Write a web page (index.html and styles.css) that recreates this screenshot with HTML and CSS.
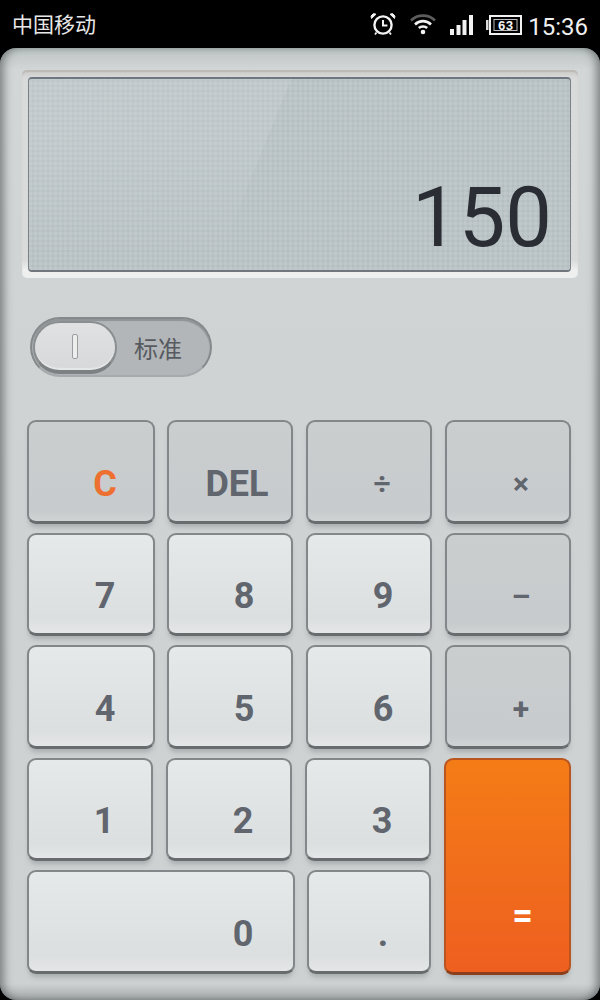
FILE: index.html
```html
<!DOCTYPE html>
<html lang="zh-CN">
<head>
    <meta charset="UTF-8">
    <meta name="viewport" content="width=device-width, initial-scale=1.0">
    <title>计算器</title>
    <link rel="stylesheet" href="styles.css">
</head>
<body>
    <div class="statusbar">
        <span class="carrier">中国移动</span>
        <div class="status-right">
            <svg class="icon-alarm" width="26" height="24" viewBox="0 0 26 24" fill="none" stroke="#f2f2f2">
                <circle cx="13" cy="13" r="8.600" stroke-width="2.400"/>
                <path d="M13 8v5.400h4.400" stroke-width="2"/>
                <path d="M1.500 6.500 6 2.200 3.400 1.600 1 4z M24.500 6.500 20 2.200l2.600-.6L25 4z" fill="#f2f2f2" stroke-width="1"/>
                <path d="M6.500 20.500 5 22.500M19.500 20.500l1.500 2" stroke-width="1.800"/>
            </svg>
            <svg class="icon-wifi" width="26" height="22" viewBox="0 0 26 22" fill="none" stroke-width="2.600">
                <path d="M1 7.500C7.500 1 18.500 1 25 7.500" stroke="#5d5d5d"/>
                <path d="M5 11.500C9.500 7 16.500 7 21 11.500" stroke="#f2f2f2"/>
                <path d="M8.800 15C11 13 15 13 17.200 15" stroke="#f2f2f2"/>
                <circle cx="13" cy="19" r="2.300" fill="#f2f2f2"/>
            </svg>
            <svg class="icon-signal" width="23" height="20" viewBox="0 0 23 20" fill="#f2f2f2">
                <rect x="0" y="14" width="4" height="6"/>
                <rect x="6.500" y="10" width="4" height="10"/>
                <rect x="12.500" y="5" width="4" height="15"/>
                <rect x="19" y="0" width="4" height="20"/>
            </svg>
            <svg class="icon-battery" width="36" height="20" viewBox="0 0 36 20">
                <rect x="0" y="5" width="2.500" height="10" fill="#dcdcdc"/>
                <rect x="4" y="1" width="31" height="18" fill="none" stroke="#f2f2f2" stroke-width="2"/>
                <rect x="8" y="4.500" width="23" height="11" fill="none" stroke="#bdbdbd" stroke-width="1"/>
                <text x="19.500" y="14.500" text-anchor="middle" class="battery-text">63</text>
            </svg>
            <span class="time">15:36</span>
        </div>
    </div>

    <div class="panel">
        <div class="display-frame">
            <div class="display">150</div>
        </div>

        <div class="toggle">
            <div class="toggle-knob"><span class="toggle-bar"></span></div>
            <span class="toggle-label">标准</span>
        </div>

        <div class="keypad">
            <div class="keys-left">
                <div class="row">
                    <div class="key func w128 orange-text">C</div>
                    <div class="key func w126 del">DEL</div>
                    <div class="key func w126 op">÷</div>
                </div>
                <div class="row h103">
                    <div class="key w128">7</div>
                    <div class="key w126">8</div>
                    <div class="key w126">9</div>
                </div>
                <div class="row">
                    <div class="key w128">4</div>
                    <div class="key w126">5</div>
                    <div class="key w126">6</div>
                </div>
                <div class="row h103 narrow">
                    <div class="key w126">1</div>
                    <div class="key w126">2</div>
                    <div class="key w126">3</div>
                </div>
                <div class="row narrow">
                    <div class="key w268 zero">0</div>
                    <div class="key w124">.</div>
                </div>
            </div>
            <div class="keys-right">
                <div class="key func op h104">×</div>
                <div class="key func op h103">–</div>
                <div class="key func op h104">+</div>
                <div class="key equals">=</div>
            </div>
        </div>
    </div>
</body>
</html>
```

FILE: styles.css
```css
html, body {
    margin: 0;
    padding: 0;
}
body {
    width: 600px;
    height: 1000px;
    overflow: hidden;
    background: #000;
    font-family: Roboto, "Noto Sans CJK SC", sans-serif;
}

/* status bar */
.statusbar {
    height: 48px;
    display: flex;
    justify-content: space-between;
    align-items: center;
    padding: 0 12px;
    color: #e8e8e8;
}
.carrier {
    font-family: "Noto Sans CJK SC", sans-serif;
    font-size: 21px;
    line-height: 48px;
    margin-top: -3px;
}
.status-right {
    display: flex;
    align-items: center;
}
.icon-alarm {
    margin-right: 14px;
    margin-top: 0;
}
.icon-wifi {
    margin-right: 14px;
    margin-top: 0;
}
.icon-signal {
    margin-right: 13px;
    margin-top: 2px;
}
.icon-battery {
    margin-right: 6px;
    margin-top: 1px;
}
.battery-text {
    font-family: "Liberation Mono", monospace;
    font-size: 13px;
    font-weight: bold;
    fill: #f2f2f2;
}
.time {
    font-size: 24px;
    line-height: 48px;
    margin-top: 6px;
    color: #f0f0f0;
}

/* calculator body */
.panel {
    height: 952px;
    box-sizing: border-box;
    padding: 22px 22px 0;
    border-radius: 16px;
    background: linear-gradient(#bcc5c3 0, #d3d6d6 22px, #cfd3d4 300px, #cdd1d2 936px, #a3a7a8 952px);
    box-shadow: inset 7px 0 8px -3px rgba(60, 64, 66, 0.55), inset -7px 0 8px -3px rgba(60, 64, 66, 0.55);
}

/* display */
.display-frame {
    height: 208px;
    box-sizing: border-box;
    padding: 7px 7px 6px 6px;
    border-radius: 5px;
    background: linear-gradient(#c9c9c6 0, #d9dbda 8px, #d9dbda 190px, #eeefef 200px);
    box-shadow: inset 0 2px 1px #bdb9b5;
}
.display {
    position: relative;
    height: 195px;
    box-sizing: border-box;
    display: flex;
    justify-content: flex-end;
    align-items: flex-end;
    padding: 0 18px 2px 0;
    border: 1px solid #7a8085;
    border-top: 2px solid #6f7680;
    border-bottom: 2px solid #70767c;
    border-radius: 4px;
    background-color: #bac4c6;
    background-image:
        repeating-linear-gradient(90deg, rgba(255, 255, 255, 0.04) 0 3px, rgba(110, 120, 125, 0.04) 3px 5px),
        repeating-linear-gradient(0deg, rgba(255, 255, 255, 0.04) 0 3px, rgba(110, 120, 125, 0.04) 3px 5px);
    color: #2a2d33;
    font-size: 83px;
    line-height: 100px;
}
.display::before {
    content: "";
    position: absolute;
    inset: 0;
    background: linear-gradient(112deg, rgba(255, 255, 255, 0.12) 0, rgba(255, 255, 255, 0.09) 243px, rgba(255, 255, 255, 0) 243px);
    -webkit-mask-image: linear-gradient(#000 30%, transparent 95%);
    mask-image: linear-gradient(#000 30%, transparent 95%);
}

/* mode switch */
.toggle {
    width: 182px;
    height: 60px;
    box-sizing: border-box;
    margin: 39px 0 0 8px;
    display: flex;
    align-items: center;
    padding-left: 1px;
    border-radius: 30px;
    border: 2px solid #85898b;
    border-bottom-color: #a6aaac;
    background: #b2b6b8;
    box-shadow: inset 0 2px 1px #8f9395;
}
.toggle-knob {
    width: 84px;
    height: 53px;
    box-sizing: border-box;
    display: flex;
    align-items: center;
    justify-content: center;
    border-radius: 27px;
    border: 2px solid #8a8e90;
    border-bottom: 4px solid #7d8183;
    background: linear-gradient(#dfe1e2, #d6d8d9);
    box-shadow: inset 0 -2px 1px #e6e8e8;
}
.toggle-bar {
    width: 4px;
    height: 23px;
    border: 1px solid #9a9ea0;
    border-radius: 2px;
    background: #eceeee;
}
.toggle-label {
    margin-left: 17px;
    font-family: "Noto Sans CJK SC", sans-serif;
    font-size: 24px;
    color: #575b61;
}

/* keys */
.keypad {
    display: flex;
    gap: 13px;
    margin: 43px 0 0 5px;
}
.keys-left {
    width: 405px;
    display: flex;
    flex-direction: column;
    gap: 9px;
}
.keys-right {
    width: 126px;
    display: flex;
    flex-direction: column;
    gap: 9px;
}
.row {
    height: 104px;
    display: flex;
    justify-content: space-between;
}
.row.h103 {
    height: 103px;
}
.row.narrow {
    width: 404px;
}
.key {
    box-sizing: border-box;
    display: flex;
    align-items: center;
    justify-content: center;
    padding: 24px 0 0 28px;
    border: 2px solid #83878a;
    border-bottom: 3px solid #686c6f;
    border-radius: 9px;
    background: linear-gradient(#e6e9ea, #dcdfe0 85%, #e4e6e7);
    box-shadow: 0 5px 5px -2px rgba(100, 104, 106, 0.35);
    color: #60656e;
    font-size: 36px;
    font-weight: 700;
}
.key.func {
    background: linear-gradient(#cacecf, #c7cbcd 90%, #d0d3d4);
}
.w128 {
    width: 128px;
    margin-right: -1px;
}
.w126 {
    width: 126px;
}
.w124 {
    width: 124px;
}
.w268 {
    width: 268px;
}
.h104 {
    height: 104px;
}
.key.h103 {
    height: 103px;
}
.orange-text {
    color: #ed7030;
}
.key.del {
    padding-left: 14px;
}
.key.op {
    font-size: 30px;
    padding-left: 26px;
}
.key.zero {
    padding-left: 164px;
}
.key.equals {
    height: 217px;
    margin-left: -1px;
    padding: 100px 0 0 30px;
    border: 2px solid #b9551f;
    border-bottom: 3px solid #8c3f1c;
    background: linear-gradient(#f47c16, #ee5f20);
    color: #fff;
}
```
